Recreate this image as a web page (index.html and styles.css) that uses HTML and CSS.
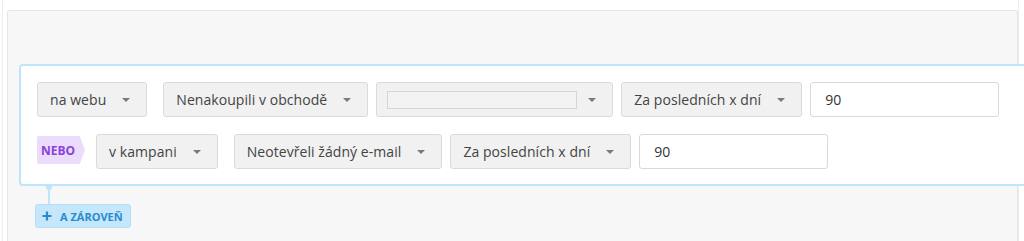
FILE: index.html
```html
<!DOCTYPE html>
<html lang="cs">
<head>
<meta charset="utf-8">
<title>Segment</title>
<link rel="stylesheet" href="styles.css">
</head>
<body>
<div class="page">
  <div class="panel">
    <div class="rules">
      <div class="row">
        <div class="select first"><span class="label">na webu</span><span class="caret"></span></div>
        <div class="select"><span class="label">Nenakoupili v obchodě</span><span class="caret"></span></div>
        <div class="select select-empty"><span class="inner"></span><span class="caret"></span></div>
        <div class="select"><span class="label">Za posledních x dní</span><span class="caret"></span></div>
        <div class="input">90</div>
      </div>
      <div class="row">
        <div class="badge">NEBO</div>
        <div class="select first"><span class="label">v kampani</span><span class="caret"></span></div>
        <div class="select"><span class="label">Neotevřeli žádný e-mail</span><span class="caret"></span></div>
        <div class="select"><span class="label">Za posledních x dní</span><span class="caret"></span></div>
        <div class="input">90</div>
      </div>
    </div>
    <div class="connector"><span class="dot"></span><span class="line"></span></div>
    <div class="add-btn">
      <svg class="plus" width="10" height="10" viewBox="0 0 10 10" aria-hidden="true"><path d="M5 0.5v9M0.5 5h9" stroke="#2a8ad0" stroke-width="2.2" fill="none"/></svg>
      <span>A ZÁROVEŇ</span>
    </div>
  </div>
</div>
</body>
</html>
```
FILE: styles.css
```css
html, body {
  margin: 0;
  padding: 0;
  background: #ffffff;
  overflow: hidden;
  height: 241px;
}
body {
  font-family: "Open Sans", "Liberation Sans", sans-serif;
  color: #444444;
}
.page {
  margin-left: 2px;
  width: 1017px;
  height: 241px;
  border-left: 1px solid #ececec;
  border-right: 1px solid #ececec;
  padding: 10px 0 0 4px;
  box-sizing: border-box;
}
.panel {
  background: #f7f7f7;
  border: 1px solid #e6e6e6;
  border-bottom: none;
  border-radius: 3px 3px 0 0;
  height: 231px;
  padding: 53px 0 0 11px;
  box-sizing: border-box;
}
.rules {
  width: 1020px;
  background: #ffffff;
  border: 2px solid #bfe5fa;
  border-radius: 4px;
  padding: 16px 0 15px 16px;
  box-sizing: border-box;
  display: flex;
  flex-direction: column;
  gap: 17px;
}
.row {
  display: flex;
  align-items: center;
  gap: 8px;
  height: 35px;
}
.select {
  height: 35px;
  box-sizing: border-box;
  background: #f1f1f1;
  border: 1px solid #dadada;
  border-radius: 3px;
  display: flex;
  align-items: center;
  padding: 0 16px 0 12px;
  font-size: 14px;
  letter-spacing: 0.06px;
  white-space: nowrap;
}
.select.first {
  margin-right: 8px;
}
.label {
  margin-right: 16px;
}
.caret {
  width: 0;
  height: 0;
  border-left: 4px solid transparent;
  border-right: 4px solid transparent;
  border-top: 4px solid #7a7a7a;
}
.select-empty {
  padding-left: 10px;
}
.inner {
  width: 190px;
  height: 18px;
  box-sizing: border-box;
  border: 1px solid #d6d6d6;
  background: #f3f3f3;
  margin-right: 11px;
}
.input {
  width: 189px;
  height: 35px;
  box-sizing: border-box;
  background: #ffffff;
  border: 1px solid #d9d9d9;
  border-radius: 3px;
  display: flex;
  align-items: center;
  padding-left: 14px;
  font-size: 14px;
  color: #333333;
}
.badge {
  height: 28px;
  width: 48px;
  box-sizing: border-box;
  background: #ecdcfc;
  color: #8a42d8;
  font-weight: 700;
  font-size: 12px;
  display: flex;
  align-items: center;
  padding-left: 4px;
  border-radius: 2px 0 0 2px;
  clip-path: polygon(0 0, 89% 0, 100% 50%, 89% 100%, 0 100%);
  margin-right: 3px;
  margin-top: -3px;
}
.connector {
  margin-left: 26px;
  width: 7px;
  height: 20px;
  display: flex;
  flex-direction: column;
  align-items: center;
  margin-top: -2px;
}
.dot {
  width: 6px;
  height: 6px;
  border-radius: 50%;
  background: #bfe5fa;
  flex: none;
}
.line {
  width: 2px;
  flex: 1;
  background: #bfe5fa;
}
.add-btn {
  margin-left: 16px;
  width: 96px;
  height: 24px;
  box-sizing: border-box;
  background: #c4e7fb;
  border: 1px solid #b4dff7;
  border-radius: 3px;
  display: flex;
  align-items: center;
  padding-left: 6px;
  gap: 8px;
  color: #2a8ad0;
  font-weight: 700;
  font-size: 11px;
}
.plus {
  flex: none;
}
```
